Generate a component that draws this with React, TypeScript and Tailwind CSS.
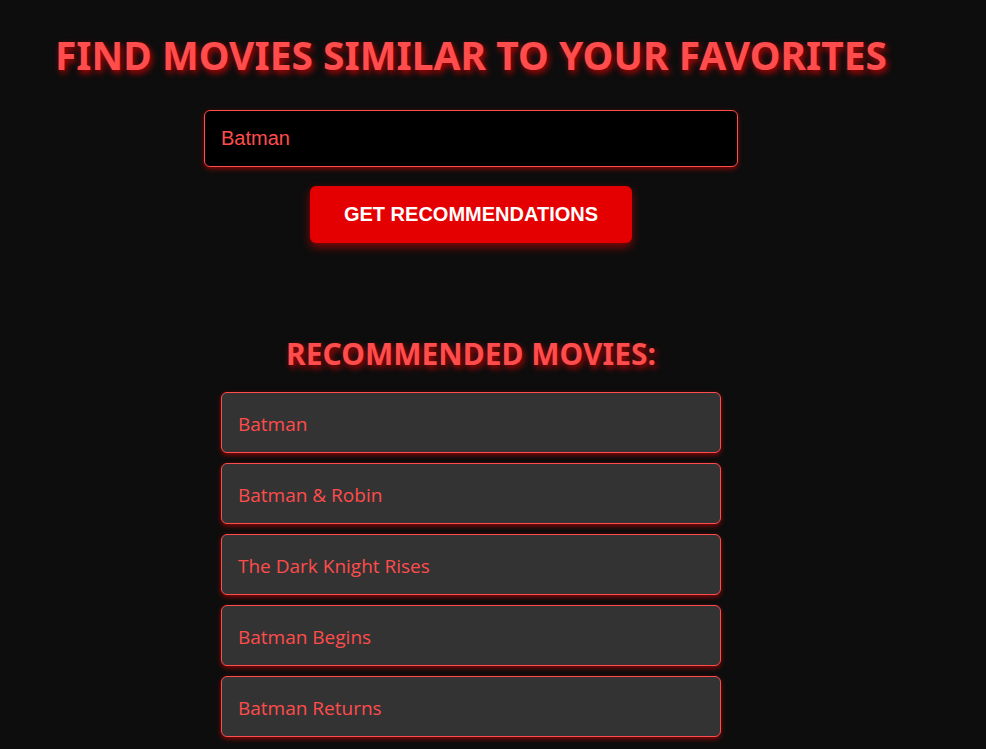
import { useState } from 'react';

const movies = [
  'Batman',
  'Batman & Robin',
  'The Dark Knight Rises',
  'Batman Begins',
  'Batman Returns',
];

export default function App() {
  const [title, setTitle] = useState('Batman');

  return (
    <div className="min-h-screen bg-[#0d0d0d] pt-8 pr-11 pb-3 text-center font-['Open_Sans',sans-serif] text-[#ff4c4c]">
      <h1 className="font-['Noto_Sans',sans-serif] text-[39px] leading-[46px] font-bold whitespace-nowrap [text-shadow:2px_3px_6px_rgba(255,0,0,0.7)]">
        FIND MOVIES SIMILAR TO YOUR FAVORITES
      </h1>
      <form className="mt-8 flex flex-col items-center gap-[19px]" onSubmit={(e) => e.preventDefault()}>
        <input
          aria-label="Movie title"
          value={title}
          onChange={(e) => setTitle(e.target.value)}
          className="h-[57px] w-full max-w-[534px] rounded-md border border-[#ff4c4c] bg-black px-4 font-['Liberation_Sans',sans-serif] text-xl text-[#ff4c4c] shadow-[0_2px_5px_rgba(255,0,0,0.5)] outline-none"
        />
        <button
          type="submit"
          className="h-[57px] w-[322px] rounded-md bg-[#e40000] pb-0.5 font-['Liberation_Sans',sans-serif] text-xl font-bold text-white shadow-[0_4px_10px_rgba(255,0,0,0.5)]"
        >
          GET RECOMMENDATIONS
        </button>
      </form>
      <h2 className="mt-[91px] font-['Noto_Sans',sans-serif] text-[30px] leading-10 font-bold [text-shadow:2px_3px_6px_rgba(255,0,0,0.7)]">
        RECOMMENDED MOVIES:
      </h2>
      <ul className="mx-auto mt-[18px] flex max-w-[500px] flex-col gap-[10px] text-left">
        {movies.map((movie) => (
          <li
            key={movie}
            className="flex h-[61px] items-center rounded-md border border-[#ff4c4c] bg-[#333333] px-4 pt-1 text-[19px] shadow-[0_2px_5px_rgba(255,0,0,0.5)]"
          >
            {movie}
          </li>
        ))}
      </ul>
    </div>
  );
}
